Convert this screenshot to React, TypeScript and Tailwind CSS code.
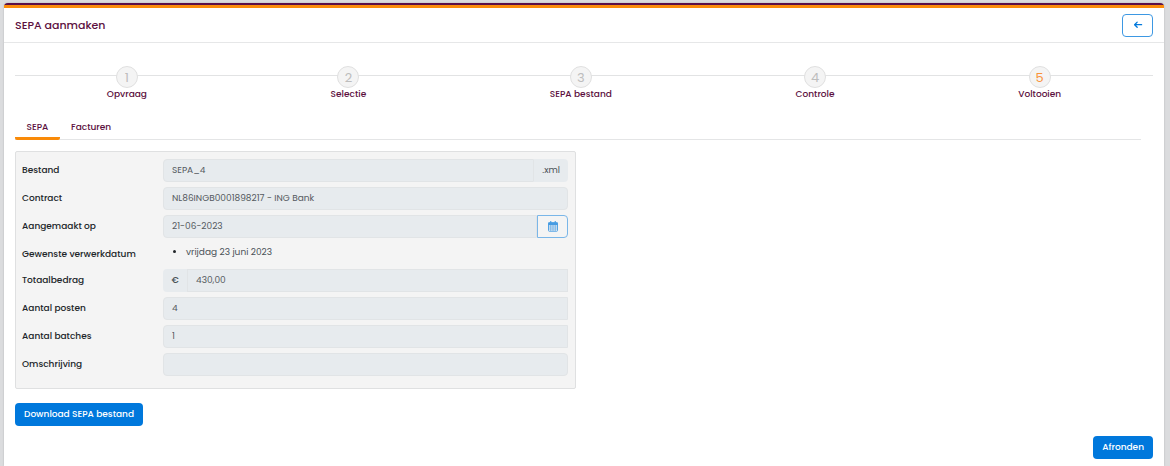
import React from "react";

const steps = ["Opvraag", "Selectie", "SEPA bestand", "Controle", "Voltooien"];

const field =
  "block h-[23px] w-full min-w-0 border border-[#e1e4e6] bg-[#e7ebee] px-2 text-[9px] text-[#555a60] outline-none";

function Row({ label, id, children }: { label: string; id: string; children: React.ReactNode }) {
  return (
    <div className="flex items-center">
      <label htmlFor={id} className="w-[141px] shrink-0 font-medium text-[#212529]">
        {label}
      </label>
      <div className="flex min-w-0 grow">{children}</div>
    </div>
  );
}

function ArrowLeft() {
  return (
    <svg
      viewBox="0 0 10 10"
      className="size-[10px]"
      fill="none"
      stroke="currentColor"
      strokeWidth="1.3"
      strokeLinecap="round"
      strokeLinejoin="round"
      aria-hidden="true"
    >
      <path d="M8.6 4.7H1.6M4.2 2.1L1.6 4.7l2.6 2.6" />
    </svg>
  );
}

function Calendar() {
  return (
    <svg viewBox="0 0 20 22" className="h-[11px] w-[10px]" fill="none" stroke="currentColor" aria-hidden="true">
      <rect x="1" y="3.5" width="18" height="17" rx="1.5" strokeWidth="1.8" />
      <path d="M1 3.5h18v4.5H1z" fill="currentColor" strokeWidth="1.2" />
      <path d="M5.5 8v12M10 8v12M14.5 8v12M1 12h18M1 16h18" strokeWidth="1.2" />
      <path d="M5.5 1v4M14.5 1v4" strokeWidth="2.4" strokeLinecap="round" />
    </svg>
  );
}

export default function App() {
  return (
    <div className="min-h-screen bg-[#dbdcde] pt-[3px] pr-[6px] pl-1 font-['Poppins','Inter',sans-serif] text-[9px] leading-[15px]">
      <main className="flex min-h-[calc(100vh-3px)] flex-col rounded-t-sm border-t-2 border-[#5c0f47] bg-white shadow-[0_0_2px_rgba(0,0,0,0.2)]">
        <header className="flex h-[38px] items-center justify-between border-t-3 border-b border-t-[#fb8c0b] border-b-[#e6e7e8] px-[11px]">
          <h1 className="text-[11px] font-medium text-[#5c0f40]">SEPA aanmaken</h1>
          <button
            type="button"
            aria-label="Terug"
            className="flex h-[23px] w-[31px] items-center justify-center rounded border border-[#3d98e3] text-[#0078dc]"
          >
            <ArrowLeft />
          </button>
        </header>

        <div className="flex grow flex-col px-[11px] pt-[23px] pb-[7px]">
          <div className="relative">
            <div className="absolute inset-x-0 top-[9px] border-t border-[#e2e3e4]" />
            <ol className="relative flex justify-around">
              {steps.map((step, i) => (
                <li key={step} className="flex flex-col items-center">
                  <span
                    className={
                      "flex size-[22px] items-center justify-center rounded-full border border-[#e0e0e0] bg-[#f4f4f4] text-[13px] " +
                      (i === 4 ? "text-[#f9923a]" : "text-[#bdbdbd]")
                    }
                  >
                    {i + 1}
                  </span>
                  <span className="-mt-px font-medium text-[#5c0f40]">{step}</span>
                </li>
              ))}
            </ol>
          </div>

          <div role="tablist" className="mt-[15px] mr-3 flex border-b border-[#e4e5e6]">
            <button
              type="button"
              role="tab"
              aria-selected="true"
              className="-mb-px h-[23px] w-[45px] rounded-b-xs border-b-[3px] border-[#f98a08] font-medium text-[#5c0f40]"
            >
              SEPA
            </button>
            <button
              type="button"
              role="tab"
              aria-selected="false"
              className="h-[22px] px-[11px] pb-0.5 font-medium text-[#5c0f40]"
            >
              Facturen
            </button>
          </div>

          <div className="mt-[11px] w-1/2 pr-2">
            <form className="flex flex-col gap-[5px] rounded-xs border border-[#dfe0e1] bg-[#f4f4f4] pt-[7px] pr-[7px] pb-3 pl-1.5">
              <Row label="Bestand" id="bestand">
                <input id="bestand" readOnly defaultValue="SEPA_4" className={field + " rounded-l"} />
                <span className="flex shrink-0 items-center rounded-r bg-[#e7ebee] px-2 text-[#495057]">.xml</span>
              </Row>
              <Row label="Contract" id="contract">
                <input
                  id="contract"
                  readOnly
                  defaultValue="NL86INGB0001898217 - ING Bank"
                  className={field + " rounded"}
                />
              </Row>
              <Row label="Aangemaakt op" id="aangemaakt">
                <input id="aangemaakt" readOnly defaultValue="21-06-2023" className={field + " rounded-l"} />
                <button
                  type="button"
                  aria-label="Kies datum"
                  className="flex h-[23px] w-[31px] shrink-0 items-center justify-center rounded-r border border-[#7ab6e8] text-[#469ce3]"
                >
                  <Calendar />
                </button>
              </Row>
              <div className="flex h-[21px]">
                <span className="w-[141px] shrink-0 pt-1 font-medium text-[#212529]">Gewenste verwerkdatum</span>
                <ul className="list-disc pt-0.5 pl-[23px] text-[#495057] marker:text-[#212529]">
                  <li>vrijdag 23 juni 2023</li>
                </ul>
              </div>
              <Row label="Totaalbedrag" id="totaal">
                <span className="flex w-6 shrink-0 items-center justify-center rounded-l bg-[#e7ebee] font-medium text-[#495057]">
                  €
                </span>
                <input id="totaal" readOnly defaultValue="430,00" className={field} />
              </Row>
              <Row label="Aantal posten" id="posten">
                <input id="posten" readOnly defaultValue="4" className={field + " rounded-l"} />
              </Row>
              <Row label="Aantal batches" id="batches">
                <input id="batches" readOnly defaultValue="1" className={field + " rounded-l"} />
              </Row>
              <Row label="Omschrijving" id="omschrijving">
                <input id="omschrijving" readOnly className={field + " rounded"} />
              </Row>
            </form>
          </div>

          <button
            type="button"
            className="mt-[14px] h-[23px] self-start rounded bg-[#0078dc] px-[9px] font-medium text-white"
          >
            Download SEPA bestand
          </button>
          <button
            type="button"
            className="mt-auto h-[23px] self-end rounded bg-[#0078dc] px-[9px] font-medium text-white"
          >
            Afronden
          </button>
        </div>
      </main>
    </div>
  );
}
